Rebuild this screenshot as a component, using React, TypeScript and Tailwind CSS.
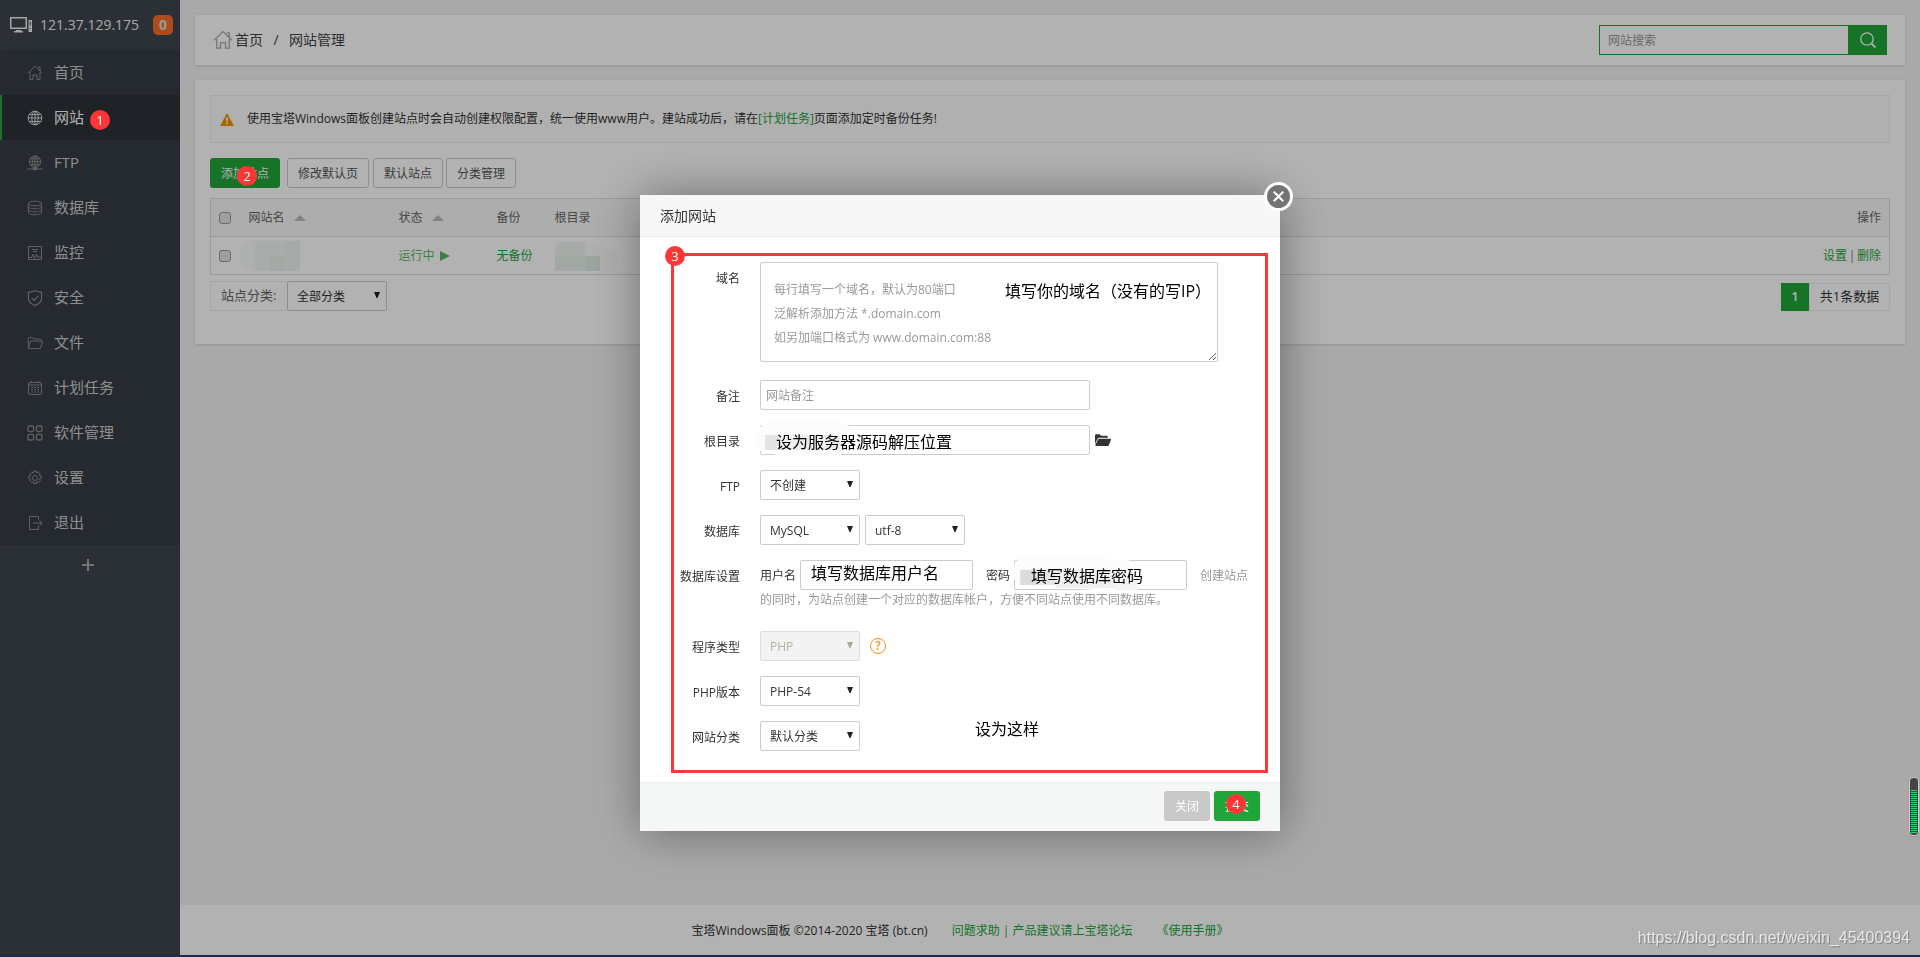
import React from "react";

type IconProps = { className?: string };

const Svg = ({ className, children, box = "0 0 16 16" }: { className?: string; children: React.ReactNode; box?: string }) => (
  <svg viewBox={box} className={className} fill="none" stroke="currentColor" strokeWidth="1" aria-hidden="true">
    {children}
  </svg>
);

const HomeIcon = ({ className = "size-4" }: IconProps) => (
  <Svg className={className}>
    <path d="M.8 8.2 8 1.2l7.2 7M11 2.2h2v3.6M3 7.2v7.3h3V10h4v4.5h3V7.2" />
  </Svg>
);
const GlobeIcon = ({ className = "size-4" }: IconProps) => (
  <Svg className={className}>
    <circle cx="8" cy="8" r="6.8" />
    <ellipse cx="8" cy="8" rx="3.2" ry="6.8" />
    <path d="M8 1.2v13.6M1.2 8h13.6M2.2 4.6h11.6M2.2 11.4h11.6" />
  </Svg>
);
const FtpIcon = ({ className = "size-4" }: IconProps) => (
  <Svg className={className}>
    <circle cx="8" cy="6.7" r="5.7" />
    <ellipse cx="8" cy="6.7" rx="2.7" ry="5.7" />
    <path d="M8 1v11.4M2.3 6.7h11.4M3.2 3.8h9.6M3.2 9.6h9.6" />
    <path d="M0 14h16" />
    <path d="M6 14h4" strokeWidth="2.4" />
  </Svg>
);
const DatabaseIcon = ({ className = "size-4" }: IconProps) => (
  <Svg className={className}>
    <ellipse cx="8" cy="3.5" rx="6.6" ry="2.3" />
    <path d="M1.4 3.5v9c0 1.3 3 2.3 6.6 2.3s6.6-1 6.6-2.3v-9M1.4 6.5c0 1.3 3 2.3 6.6 2.3s6.6-1 6.6-2.3M1.4 9.5c0 1.3 3 2.3 6.6 2.3s6.6-1 6.6-2.3" />
  </Svg>
);
const MonitorIcon = ({ className = "size-4" }: IconProps) => (
  <Svg className={className}>
    <path d="M1.5 1.5h13v13h-13zM5 4.5h6M6 6.5h4M2 12.5h2.5l1.5-3 1.6 4 1.8-4.5 1.2 3H14" />
  </Svg>
);
const ShieldIcon = ({ className = "size-4" }: IconProps) => (
  <Svg className={className}>
    <path
      d="M8 .6c2 1.2 4.300 1.700 6.600 1.700v5.700c0 3.500-2.600 6-6.600 7.500-4-1.500-6.600-4-6.600-7.500V2.300C3.700 2.300 6 1.800 8 .6zM4.700 8l2.500 2.400 4.300-4.600"
      strokeWidth="1.200"
    />
  </Svg>
);
const FolderIcon = ({ className = "size-4" }: IconProps) => (
  <Svg className={className}>
    <path d="M1.300 13V3.500c0-.6.400-1 1-1h3.400l1.300 1.500h5.700c.6 0 1 .4 1 1v1M1.300 13.500 3.600 6h12l-2 7c-.1.400-.5.600-1 .6H1.500" />
  </Svg>
);
const CalendarIcon = ({ className = "size-4" }: IconProps) => (
  <Svg className={className}>
    <rect x="1.500" y="2.500" width="13" height="12" rx="1.500" />
    <path d="M1.500 5h13M4.500 1v2M11.500 1v2" />
    <path d="M4 7.500h8M4 9.700h8M4 12h8" strokeDasharray="2 1" />
  </Svg>
);
const GridIcon = ({ className = "size-4" }: IconProps) => (
  <Svg className={className}>
    <g strokeWidth="1.300">
      <rect x="1" y="1" width="5.600" height="5.600" rx="1.500" />
      <rect x="9.400" y="1" width="5.600" height="5.600" rx="1.500" />
      <rect x="1" y="9.400" width="5.600" height="5.600" rx="1.500" />
      <rect x="9.400" y="9.400" width="5.600" height="5.600" rx="1.500" />
    </g>
  </Svg>
);
const GearIcon = ({ className = "size-4" }: IconProps) => (
  <Svg className={className}>
    <circle cx="8" cy="8" r="2.500" />
    <path d="M6.700 1.200h2.600l.4 1.900 1.700-1.100 1.900 1.900-1.100 1.600 2 .5v2.600l-2 .5 1.100 1.700-1.900 1.900-1.700-1.100-.4 2h-2.600l-.4-2-1.700 1.100-1.900-1.900 1.100-1.700-2-.5V6l2-.5-1.100-1.600 1.900-1.900 1.700 1.100z" />
  </Svg>
);
const ExitIcon = ({ className = "size-4" }: IconProps) => (
  <Svg className={className}>
    <path d="M11.500 5V1.500h-9v13h9V11M6 8h9M12.500 5.500 15 8l-2.500 2.500" />
  </Svg>
);
const ComputerIcon = () => (
  <svg viewBox="0 0 23 18" className="h-[18px] w-[23px] shrink-0" fill="currentColor" aria-hidden="true">
    <path fillRule="evenodd" d="M0 1h17v12H0zM1.500 2.500v9h14v-9z" />
    <path d="M6 14h5v1h2v1.500H4V15h2z" />
    <path fillRule="evenodd" d="M18.500 4H22v12h-3.500zM19.700 5.500v4h1v-4zM19.700 12v1h1v-1z" />
  </svg>
);
const SearchIcon = () => (
  <svg viewBox="0 0 16 16" className="size-4" fill="none" stroke="currentColor" strokeWidth="1.300" aria-hidden="true">
    <circle cx="7" cy="7" r="6.200" />
    <path d="m11.300 11.300 4.200 4.200" strokeWidth="1.800" />
  </svg>
);
const SortIcon = () => (
  <svg viewBox="0 0 12 6" className="ml-[9px] inline-block h-[6px] w-3 align-middle" fill="#bbbbbb" aria-hidden="true">
    <path d="m6 0 6 6H0z" />
  </svg>
);

const menu: { label: string; icon: React.ComponentType<IconProps>; active?: boolean }[] = [
  { label: "首页", icon: HomeIcon },
  { label: "网站", icon: GlobeIcon, active: true },
  { label: "FTP", icon: FtpIcon },
  { label: "数据库", icon: DatabaseIcon },
  { label: "监控", icon: MonitorIcon },
  { label: "安全", icon: ShieldIcon },
  { label: "文件", icon: FolderIcon },
  { label: "计划任务", icon: CalendarIcon },
  { label: "软件管理", icon: GridIcon },
  { label: "设置", icon: GearIcon },
  { label: "退出", icon: ExitIcon },
];

const Step = ({ n, className }: { n: string; className: string }) => (
  <span
    className={`absolute z-50 flex size-5 items-center justify-center rounded-full bg-[#ff3636] text-[13px] leading-5 text-white ${className}`}
  >
    {n}
  </span>
);

const Select = ({ id, label, value, disabled = false }: { id: string; label?: string; value: string; disabled?: boolean }) => (
  <span className="relative inline-block">
    <select
      id={id}
      aria-label={label}
      disabled={disabled}
      className="block h-[30px] w-[100px] appearance-none rounded-xs border border-[#cccccc] bg-white pt-px pl-[9px] text-xs text-[#333333] disabled:border-[#dddddd] disabled:bg-[#f3f3f3] disabled:text-[#b4b2a2] disabled:opacity-100"
    >
      <option>{value}</option>
    </select>
    <svg
      viewBox="0 0 6 6"
      className={`pointer-events-none absolute top-[11px] right-[7px] size-[6px] ${disabled ? "text-[#aaa898]" : "text-[#222222]"}`}
      fill="currentColor"
      aria-hidden="true"
    >
      <path d="M0 0h6L3.500 6h-1z" />
    </svg>
  </span>
);

const Row = ({ id, label, children, className = "mb-[15px]" }: { id: string; label: string; children: React.ReactNode; className?: string }) => (
  <div className={`flex items-start ${className}`}>
    <label htmlFor={id} className="w-[100px] shrink-0 pt-[7px] text-right leading-5">
      {label}
    </label>
    <div className="flex min-w-0 flex-1 items-center pl-5">{children}</div>
  </div>
);

const Note = ({ className, children }: { className: string; children: React.ReactNode }) => (
  <p className={`pointer-events-none absolute text-base leading-5 whitespace-nowrap text-black ${className}`}>{children}</p>
);

function Sidebar() {
  return (
    <aside className="flex w-[180px] shrink-0 flex-col bg-[#3e454f] text-[#cccccc]">
      <div className="flex h-[50px] items-center pl-[10px] text-[#eeeeee]">
        <ComputerIcon />
        <span className="ml-[7px] text-sm whitespace-nowrap">121.37.129.175</span>
      </div>
      <nav>
        <ul>
          {menu.map(({ label, icon: Icon, active }) => (
            <li key={label}>
              <a
                href="#"
                className={`flex h-[45px] items-center border-l-2 pl-[25px] text-[15px] ${
                  active ? "border-[#20a53a] bg-[#2d3138] text-white" : "border-[#3a3e3e] bg-[#363d46] text-[#cccccc]"
                }`}
              >
                <Icon className={active ? "size-4 text-[#dddddd]" : "size-4 text-[#8c8c8c]"} />
                <span className="ml-[11px]">{label}</span>
              </a>
            </li>
          ))}
        </ul>
      </nav>
      <button type="button" aria-label="添加" className="flex h-10 items-center justify-center pr-1 text-[#aaaaaa]">
        <svg viewBox="0 0 14 14" className="size-[14px]" stroke="currentColor" strokeWidth="2" aria-hidden="true">
          <path d="M7 1v12M1 7h12" />
        </svg>
      </button>
    </aside>
  );
}

function Content() {
  const btn = "h-[30px] rounded-[3px] border border-[#cccccc] bg-white px-[10px] pt-px text-xs text-[#555555]";
  return (
    <main className="flex min-w-0 flex-1 flex-col bg-[#f3f3f3]">
      <div className="flex-1 p-[15px]">
        <header className="flex h-[50px] items-center justify-between bg-white px-[18px] shadow-[0_1px_3px_rgba(0,0,0,0.15)]">
          <div className="flex items-center text-sm text-[#444444]">
            <HomeIcon className="mr-[2px] size-5 text-[#aaaaaa]" />
            <a href="#">首页</a>
            <span className="w-[26px] text-center">/</span>
            <span>网站管理</span>
          </div>
          <form className="flex h-[30px]">
            <input
              aria-label="网站搜索"
              placeholder="网站搜索"
              className="w-[250px] border border-[#20a53a] pt-px pl-2 text-xs placeholder:text-[#999999]"
            />
            <button type="button" aria-label="搜索" className="flex w-[38px] items-center justify-center bg-[#20a53a] text-white">
              <SearchIcon />
            </button>
          </form>
        </header>

        <section className="mt-[15px] bg-white px-[15px] pt-[15px] pb-[33px] text-xs text-[#666666] shadow-[0_1px_3px_rgba(0,0,0,0.15)]">
          <div className="flex h-12 items-center border border-[#ececec] bg-[#fcfcfc] pl-[9px] text-[#333333]">
            <svg viewBox="0 0 14 13" className="h-[13px] w-[14px]" aria-hidden="true">
              <path d="M7 0 14 13H0z" fill="#f0940a" />
              <path d="M6 4.500h2l-.4 4H6.400zM6.200 9.600h1.600v1.600H6.200z" fill="#fff" />
            </svg>
            <p className="ml-[13px]">
              使用宝塔Windows面板创建站点时会自动创建权限配置，统一使用www用户。建站成功后，请在
              <a href="#" className="text-[#20a53a]">[计划任务]</a>
              页面添加定时备份任务!
            </p>
          </div>

          <div className="mt-[15px] flex">
            <button type="button" className="mr-[7px] h-[30px] w-[70px] rounded-[3px] bg-[#20a53a] pt-px text-xs text-white">添加站点</button>
            <button type="button" className={btn}>修改默认页</button>
            <button type="button" className={`ml-1 ${btn}`}>默认站点</button>
            <button type="button" className={`ml-[3px] ${btn}`}>分类管理</button>
          </div>

          <table className="mt-[10px] w-full table-fixed border-collapse border border-[#dddddd] text-left">
            <thead>
              <tr className="h-[38px] border-b border-[#dddddd] bg-[#f8f8f8]">
                <th className="w-[38px] pl-2 font-normal">
                  <input type="checkbox" aria-label="全选" className="block size-3 appearance-none rounded-[3px] border border-[#999999] bg-[#e4e4e4]" />
                </th>
                <th className="w-[150px] font-normal">网站名<SortIcon /></th>
                <th className="w-[98px] font-normal">状态<SortIcon /></th>
                <th className="w-[58px] font-normal">备份</th>
                <th className="font-normal">根目录</th>
                <th className="w-[120px] pr-2 text-right font-normal">操作</th>
              </tr>
            </thead>
            <tbody>
              <tr className="h-[38px]">
                <td className="pl-2">
                  <input type="checkbox" aria-label="选择网站" className="block size-3 appearance-none rounded-[3px] border border-[#999999] bg-[#e4e4e4]" />
                </td>
                <td>
                  <svg viewBox="0 0 61 31" className="-ml-[10px] block h-[31px] w-[61px]" aria-hidden="true">
                    <path d="M61 0H15a15.500 15.500 0 0 0 0 31h46z" fill="#fafcfb" />
                    <path d="M16 1h45v30H16z" fill="#f2f7f4" />
                    <path d="M31 16h15v15H31z" fill="#eaf2ed" />
                    <path d="M46 1h15v30H46z" fill="#eef5f0" />
                  </svg>
                </td>
                <td>
                  <a href="#" className="flex items-center text-[#5cb85c]">
                    运行中
                    <svg viewBox="0 0 10 10" className="ml-[5px] size-[10px]" fill="currentColor" aria-hidden="true">
                      <path d="M0 0l10 5-10 5z" />
                    </svg>
                  </a>
                </td>
                <td><a href="#" className="text-[#20a53a]">无备份</a></td>
                <td>
                  <svg viewBox="0 0 63 32" className="block h-8 w-[63px]" aria-hidden="true">
                    <path d="M5 1h30l22 9c8 5 7 14 2 21H0V6z" fill="#f9fbfa" />
                    <path d="M0 4 5 2h25v14h15v15H0z" fill="#f0f6f2" />
                    <path d="M0 16h45v15H0z" fill="#e8f1eb" />
                    <path d="M30 16h15v15H30z" fill="#dfebe3" />
                  </svg>
                </td>
                <td className="pr-2 text-right text-[#20a53a]">
                  <a href="#">设置</a>
                  <span className="inline-block w-[10px] text-center text-[#777777]">|</span>
                  <a href="#">删除</a>
                </td>
              </tr>
            </tbody>
          </table>

          <div className="mt-1.5 flex items-start justify-between">
            <div className="flex">
              <label htmlFor="site-type" className="flex h-[30px] w-[77px] items-center border border-r-0 border-[#ececec] pl-[10px] text-[13px]">
                站点分类:
              </label>
              <Select id="site-type" value="全部分类" />
            </div>
            <div className="mt-[2px] flex h-7 text-[13px] text-[#333333]">
              <span className="flex w-7 items-center justify-center bg-[#20a53a] font-semibold text-white">1</span>
              <span className="flex w-[81px] items-center justify-center border border-[#ececec]">共1条数据</span>
            </div>
          </div>
        </section>
      </div>

      <footer className="flex h-[50px] items-center justify-center bg-white pt-[2px] pr-[180px] text-xs text-[#333333]">
        <span>宝塔Windows面板 ©2014-2020 宝塔 (bt.cn)</span>
        <a href="#" className="ml-6 text-[#20a53a]">问题求助 | 产品建议请上宝塔论坛</a>
        <a href="#" className="ml-6 text-[#20a53a]">《使用手册》</a>
      </footer>
    </main>
  );
}

function AddSiteDialog() {
  const input = "h-[30px] rounded-xs border border-[#cccccc] bg-white pl-[5px] text-xs placeholder:text-[#999999]";
  return (
    <div className="fixed inset-0 z-40 flex items-start justify-center bg-black/30 pt-[195px]">
      <div role="dialog" aria-label="添加网站" className="relative w-[640px] rounded-xs bg-white text-xs text-[#333333] shadow-[1px_1px_50px_rgba(0,0,0,0.4)]">
        <h2 className="h-[42px] border-b border-[#eeeeee] bg-[#f7f7f7] pl-5 text-sm leading-[42px]">添加网站</h2>
        <button
          type="button"
          aria-label="关闭窗口"
          className="absolute -top-[13px] -right-[13px] flex size-[29px] items-center justify-center rounded-full border-[3px] border-white bg-[#747474] text-white"
        >
          <svg viewBox="0 0 11 11" className="size-[11px]" stroke="currentColor" strokeWidth="2" aria-hidden="true">
            <path d="m.7.7 9.600 9.600m0-9.600-9.600 9.600" />
          </svg>
        </button>

        <form className="pt-[25px] pb-[31px]">
          <Row id="domain" label="域名" className="mb-[18px]">
            <textarea
              id="domain"
              placeholder={"每行填写一个域名，默认为80端口\n泛解析添加方法 *.domain.com\n如另加端口格式为 www.domain.com:88"}
              className="block h-[100px] w-[458px] rounded-xs border border-[#cccccc] px-[13px] pt-[15px] text-xs leading-6 placeholder:text-[#999999]"
            />
          </Row>
          <Row id="remark" label="备注">
            <input id="remark" placeholder="网站备注" className={`w-[330px] ${input}`} />
          </Row>
          <Row id="root-dir" label="根目录">
            <input id="root-dir" className={`w-[330px] ${input}`} />
            <button type="button" aria-label="选择目录" className="ml-[5px] text-[#333333]">
              <svg viewBox="0 0 16 12" className="h-3 w-4" fill="currentColor" aria-hidden="true">
                <path d="M0 10V1.500C0 .7.600.200 1.300.200h3.400L6 1.700h5.500c.8 0 1.300.5 1.300 1.200v.8H4.200c-.8 0-1.400.3-1.700 1z" />
                <path d="M4.200 4.800h11c.6 0 .9.400.7 1l-2 5.200c-.2.600-.6.900-1.200.9H1c-.5 0-.8-.3-.6-.9l2.500-5.400c.2-.6.700-.8 1.300-.8z" />
              </svg>
            </button>
          </Row>
          <Row id="ftp" label="FTP">
            <Select id="ftp" value="不创建" />
          </Row>
          <Row id="database" label="数据库">
            <span className="mr-[5px] flex"><Select id="database" value="MySQL" /></span>
            <Select id="charset" label="字符集" value="utf-8" />
          </Row>
          <div className="mb-[22px]">
            <Row id="db-user" label="数据库设置" className="">
              <label htmlFor="db-user" className="w-10 pt-px">用户名</label>
              <input id="db-user" className={`w-[173px] ${input}`} />
              <label htmlFor="db-pass" className="ml-[13px] w-7 pt-px">密码</label>
              <input id="db-pass" className={`w-[173px] ${input}`} />
              <span className="ml-[13px] pt-px text-[#999999]">创建站点</span>
            </Row>
            <p className="pl-[120px] leading-[19px] text-[#999999]">的同时，为站点创建一个对应的数据库帐户，方便不同站点使用不同数据库。</p>
          </div>
          <Row id="program" label="程序类型">
            <Select id="program" value="PHP" disabled />
            <a href="#" aria-label="帮助" className="ml-[10px] flex size-4 items-center justify-center rounded-full border border-[#ff8a1c] text-xs font-semibold text-[#ff8a1c]">?</a>
          </Row>
          <Row id="php" label="PHP版本">
            <Select id="php" value="PHP-54" />
          </Row>
          <Row id="category" label="网站分类" className="">
            <Select id="category" value="默认分类" />
          </Row>
        </form>

        <div className="flex h-[49px] items-start justify-end gap-1 border-t border-[#edf0f0] bg-[#f5f6f6] pt-2 pr-5 text-white">
          <button type="button" className="h-[30px] w-[46px] rounded-[3px] bg-[#c9c9c9] pt-px">关闭</button>
          <button type="button" className="h-[30px] w-[46px] rounded-[3px] bg-[#20a53a] pt-px">提交</button>
        </div>

        <svg viewBox="0 0 100 34" className="pointer-events-none absolute top-[227px] left-[115px] h-[34px] w-[100px]" aria-hidden="true">
          <path d="M12 0h72c18 3 18 22 8 29H5C-2 28 0 4 12 0z" fill="#fcfcfc" />
          <path d="M20 27h66v6H20z" fill="#fcfcfc" />
          <path d="M10 13h15v15H10z" fill="#e4e4e4" />
          <path d="M25 13h60v15H25z" fill="#f0f0f0" />
          <path d="M40 13h15v15H40zM70 13h15v15H70z" fill="#ececec" />
        </svg>
        <svg viewBox="0 0 134 36" className="pointer-events-none absolute top-[361px] left-[371px] h-9 w-[134px]" aria-hidden="true">
          <path d="M14 0l94 3c30 0 32 30 12 33L12 30C-3 26-1 3 14 0z" fill="#fcfcfc" />
          <path d="M9 14h35v15H9z" fill="#e6e6e6" />
          <path d="M10 14h15v15H10z" fill="#dcdcdc" />
          <path d="M44 14h60v18H44z" fill="#f0f0f0" />
          <path d="M104 14h22v20h-22z" fill="#f4f4f4" />
        </svg>

        <div className="pointer-events-none absolute top-[58px] right-3 bottom-[58px] left-[31px] border-[3px] border-[#ff3636]" />
        <Note className="top-[86px] left-[365px]">填写你的域名（没有的写IP）</Note>
        <Note className="top-[237px] left-[136px]">设为服务器源码解压位置</Note>
        <Note className="top-[368px] left-[171px]">填写数据库用户名</Note>
        <Note className="top-[371px] left-[391px]">填写数据库密码</Note>
        <Note className="top-[524px] left-[335px]">设为这样</Note>
        <Step n="3" className="top-[51px] left-[25px]" />
        <Step n="4" className="top-[599px] left-[586px]" />
      </div>
    </div>
  );
}

export default function App() {
  return (
    <div className="relative flex h-screen flex-col overflow-hidden bg-[#323c62] pb-[2px] font-['Open_Sans','Noto_Sans_CJK_SC',sans-serif]">
      <div className="flex min-h-0 flex-1">
        <Sidebar />
        <Content />
      </div>
      <span className="absolute top-[15px] left-[153px] flex size-5 items-center justify-center rounded-[5px] bg-[#fc6d26] text-sm font-bold text-[#dddddd]">0</span>
      <AddSiteDialog />
      <Step n="1" className="top-[110px] left-[90px]" />
      <Step n="2" className="top-[166px] left-[237px]" />
      <div className="absolute top-[777px] right-[1px] z-50 h-[59px] w-[10px] rounded-[4px] border border-[#cccccc] bg-[#444444] px-px pt-3 pb-px shadow">
        <div className="h-full bg-[repeating-linear-gradient(to_bottom,#2bd464_0px,#2bd464_1px,#444444_1px,#444444_2px)]" />
      </div>
      <span className="absolute right-[10px] bottom-[9px] z-50 font-['Liberation_Sans',sans-serif] text-base leading-5 text-white/75 [text-shadow:1px_1px_1px_rgba(0,0,0,0.3)]">
        https://blog.csdn.net/weixin_45400394
      </span>
    </div>
  );
}
